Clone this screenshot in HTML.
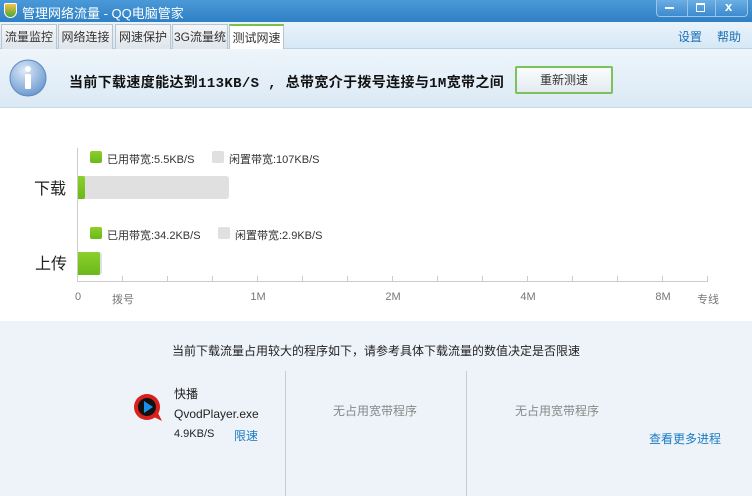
<!DOCTYPE html>
<html><head><meta charset="utf-8"><style>
*{margin:0;padding:0;box-sizing:border-box}
body{width:752px;height:496px;overflow:hidden;font-family:"Liberation Sans","Noto Sans CJK SC",sans-serif;font-size:12px;background:#fff;position:relative;color:#222}
.abs{position:absolute}
#title{left:0;top:0;width:752px;height:22px;background:linear-gradient(#4a9ad8,#2f7fc6);color:#fff;font-size:13px}
#tabsbar{left:0;top:22px;width:752px;height:27px;background:linear-gradient(#e9f3fb,#d6e8f6);border-bottom:1px solid #b9d2e6}
.tab{position:absolute;top:2px;height:25px;background:linear-gradient(#f4f6f8,#dfe5ea);border:1px solid #b8c4ce;border-bottom:none;font-size:12px;color:#333;text-align:center;line-height:24px}
.tab.act{background:#fff;border-top:2px solid #7ac04a;height:26px}
#info{left:0;top:49px;width:752px;height:59px;background:linear-gradient(#eef5fb,#dbe9f5);border-bottom:1px solid #c7d9e8}
.sw{position:absolute;width:12px;height:12px;border-radius:2px}
.g{background:linear-gradient(#8cd02c,#6ab81a)}
.gr{background:#e0e0e0}
.lg{position:absolute;font-size:11px;color:#333}
.tick{position:absolute;top:276px;width:1px;height:6px;background:#ccc}
.al{position:absolute;top:291px;font-size:11px;color:#777;transform:translateX(-50%)}
#bottom{left:0;top:321px;width:752px;height:175px;background:#eef3f9}
.m{font-family:"Liberation Mono",monospace;font-size:14px}
</style></head><body>
<div id="title" class="abs">
 <div class="abs" style="left:4px;top:3px;width:13px;height:15px;background:linear-gradient(#f6c343,#4aa43a);border-radius:2px 2px 7px 7px;border:1px solid #fff"></div>
 <div class="abs" style="left:22px;top:3px">管理网络流量 - QQ电脑管家</div>
 <div class="abs" style="left:656px;top:0;width:92px;height:17px;border:1px solid #9ec3e4;border-top:none;border-radius:0 0 4px 4px;background:linear-gradient(#6aaee4,#3d8ad0)">
  <div class="abs" style="left:8px;top:7px;width:9px;height:2px;background:#fff"></div>
  <div class="abs" style="left:30px;top:0;width:1px;height:16px;background:#9ec3e4"></div>
  <div class="abs" style="left:39px;top:3px;width:9px;height:9px;border:1px solid #fff;border-top-width:2px"></div>
  <div class="abs" style="left:58px;top:0;width:1px;height:16px;background:#9ec3e4"></div>
  <div class="abs" style="left:68px;top:-1px;color:#fff;font-size:13px;font-weight:bold">x</div>
 </div>
</div>
<div id="tabsbar" class="abs">
 <div class="tab" style="left:1px;width:56px">流量监控</div>
 <div class="tab" style="left:58px;width:55px">网络连接</div>
 <div class="tab" style="left:115px;width:56px">网速保护</div>
 <div class="tab" style="left:172px;width:56px">3G流量统计</div>
 <div class="tab act" style="left:229px;width:55px">测试网速</div>
 <div class="abs" style="left:678px;top:6px;color:#1a6fb5">设置</div>
 <div class="abs" style="left:717px;top:6px;color:#1a6fb5">帮助</div>
</div>
<div id="info" class="abs">
 <svg class="abs" style="left:9px;top:10px" width="38" height="38"><defs><radialGradient id="ig" cx="40%" cy="30%" r="70%"><stop offset="0" stop-color="#dbe9f8"/><stop offset="1" stop-color="#6f9bd0"/></radialGradient></defs><circle cx="19" cy="19" r="18" fill="url(#ig)" stroke="#5d88c0"/><circle cx="19" cy="10" r="3" fill="#fff"/><rect x="16" y="15" width="6" height="15" rx="1" fill="#fff"/></svg>
 <div class="abs" style="left:69px;top:23px;font-size:14px;letter-spacing:0.35px;font-weight:bold;color:#111;white-space:nowrap">当前下载速度能达到<span class="m">113KB/S , </span>总带宽介于拨号连接与<span class="m">1M</span>宽带之间</div>
 <div class="abs" style="left:515px;top:17px;width:98px;height:28px;border:2px solid #7bc25a;border-radius:2px;background:linear-gradient(#fafcfd,#e3eaf0);text-align:center;line-height:24px;color:#333">重新测速</div>
</div>
<div class="abs" style="left:77px;top:148px;width:1px;height:134px;background:#ccc"></div>
<div class="abs" style="left:77px;top:281px;width:631px;height:1px;background:#ccc"></div>
<div class="sw g" style="left:90px;top:151px"></div><div class="lg" style="left:107px;top:151px">已用带宽:5.5KB/S</div>
<div class="sw gr" style="left:212px;top:151px"></div><div class="lg" style="left:229px;top:151px">闲置带宽:107KB/S</div>
<div class="abs" style="left:34px;top:175px;font-size:16px">下载</div>
<div class="abs" style="left:78px;top:176px;width:151px;height:23px;background:#e0e0e0;border-radius:0 3px 3px 0"></div>
<div class="abs g" style="left:78px;top:176px;width:7px;height:23px;border-radius:0 2px 2px 0"></div>
<div class="sw g" style="left:90px;top:227px"></div><div class="lg" style="left:107px;top:227px">已用带宽:34.2KB/S</div>
<div class="sw gr" style="left:218px;top:227px"></div><div class="lg" style="left:235px;top:227px">闲置带宽:2.9KB/S</div>
<div class="abs" style="left:35px;top:250px;font-size:16px">上传</div>
<div class="abs g" style="left:78px;top:252px;width:24px;height:23px;border-radius:0 3px 3px 0;border-right:2px solid #e0e0e0"></div>
<div class="tick" style="left:122px"></div><div class="tick" style="left:167px"></div><div class="tick" style="left:212px"></div><div class="tick" style="left:257px"></div><div class="tick" style="left:302px"></div><div class="tick" style="left:347px"></div><div class="tick" style="left:392px"></div><div class="tick" style="left:437px"></div><div class="tick" style="left:482px"></div><div class="tick" style="left:527px"></div><div class="tick" style="left:572px"></div><div class="tick" style="left:617px"></div><div class="tick" style="left:662px"></div><div class="tick" style="left:707px"></div>
<div class="al" style="left:78px">0</div><div class="al" style="left:123px">拨号</div><div class="al" style="left:258px">1M</div><div class="al" style="left:393px">2M</div><div class="al" style="left:528px">4M</div><div class="al" style="left:663px">8M</div><div class="al" style="left:708px">专线</div>
<div id="bottom" class="abs">
 <div class="abs" style="left:0;top:21px;width:752px;text-align:center;color:#222">当前下载流量占用较大的程序如下，请参考具体下载流量的数值决定是否限速</div>
 <svg class="abs" style="left:132px;top:72px" width="32" height="30"><circle cx="15" cy="14" r="13" fill="#d8201c"/><path d="M22 24 L30 28 L26 20 Z" fill="#d8201c"/><circle cx="15" cy="14" r="9" fill="#111"/><path d="M12 8 L21 14 L12 20 Z" fill="#1c8fe8"/></svg>
 <div class="abs" style="left:174px;top:64px">快播</div>
 <div class="abs" style="left:174px;top:86px">QvodPlayer.exe</div>
 <div class="abs" style="left:174px;top:107px;font-size:11px">4.9KB/S</div>
 <div class="abs" style="left:234px;top:106px;color:#1a7bc4">限速</div>
 <div class="abs" style="left:285px;top:50px;width:1px;height:125px;background:#c8ccd2"></div>
 <div class="abs" style="left:466px;top:50px;width:1px;height:125px;background:#c8ccd2"></div>
 <div class="abs" style="left:333px;top:81px;color:#888">无占用宽带程序</div>
 <div class="abs" style="left:515px;top:81px;color:#888">无占用宽带程序</div>
 <div class="abs" style="left:649px;top:109px;color:#1a7bc4">查看更多进程</div>
</div>
</body></html>
